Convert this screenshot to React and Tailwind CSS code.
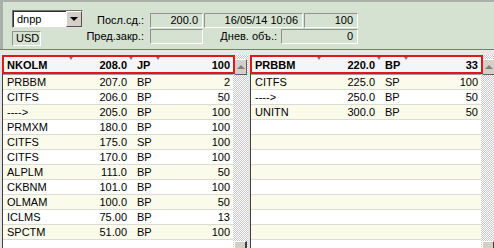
import React from "react";

const leftRows = [
  ["PRBBM", "207.0", "BP", "2"],
  ["CITFS", "206.0", "BP", "50"],
  ["---->", "205.0", "BP", "100"],
  ["PRMXM", "180.0", "BP", "100"],
  ["CITFS", "175.0", "SP", "100"],
  ["CITFS", "170.0", "BP", "100"],
  ["ALPLM", "111.0", "BP", "50"],
  ["CKBNM", "101.0", "BP", "100"],
  ["OLMAM", "100.0", "BP", "50"],
  ["ICLMS", "75.00", "BP", "13"],
  ["SPCTM", "51.00", "BP", "100"],
];

const rightRows = [
  ["CITFS", "225.0", "SP", "100"],
  ["---->", "250.0", "BP", "50"],
  ["UNITN", "300.0", "BP", "50"],
  ["", "", "", ""],
  ["", "", "", ""],
  ["", "", "", ""],
  ["", "", "", ""],
  ["", "", "", ""],
  ["", "", "", ""],
  ["", "", "", ""],
  ["", "", "", ""],
];

const Sunken = ({ className, children }) => (
  <div
    className={
      "h-full border border-t-[#8c948c] border-l-[#8c948c] border-b-white border-r-white bg-[#d5e1d1] text-right pr-[4px] leading-[13px] " +
      className
    }
  >
    {children}
  </div>
);

const Tick = ({ x }) => (
  <div
    className="absolute top-[2px] w-0 h-0 border-l-[2px] border-r-[2px] border-t-[3px] border-l-transparent border-r-transparent border-t-[#777]"
    style={{ left: x }}
  />
);

const Row = ({ r, i }) => (
  <div
    className={
      "grid grid-cols-[67px_60px_27px_76px] h-[15px] leading-[14px] border-b border-[#dcdcd4] " +
      (i % 2 === 0 ? "bg-[#fbfbeb]" : "bg-white")
    }
  >
    <div className="pl-[4px]">{r[0]}</div>
    <div className="text-right pr-[3px]">{r[1]}</div>
    <div className="pl-[7px]">{r[2]}</div>
    <div className="text-right pr-[3px]">{r[3]}</div>
  </div>
);

const Table = ({ head, rows }) => (
  <div className="flex h-full">
    <div className="w-[3px] h-full flex">
      <div className="w-[2px] bg-[#e4e4e4]" />
      <div className="w-px bg-[#404040]" />
    </div>
    <div className="w-[230px] h-full bg-white flex flex-col">
      <div className="relative grid grid-cols-[67px_60px_27px_76px] h-[20px] leading-[20px] font-bold bg-[#f3f6f8] border-b border-[#a0a0a0]">
        <div className="pl-[4px]">{head[0]}</div>
        <div className="text-right pr-[3px]">{head[1]}</div>
        <div className="pl-[7px]">{head[2]}</div>
        <div className="text-right pr-[3px]">{head[3]}</div>
        <Tick x={66} />
        <Tick x={126} />
        <Tick x={153} />
        <div className="absolute -left-px top-0 -right-[2px] bottom-0 border-2 border-[#e01818]" />
      </div>
      {rows.map((r, i) => (
        <Row key={i} r={r} i={i} />
      ))}
    </div>
    <div className="w-[15px] h-full flex flex-col bg-[repeating-conic-gradient(#c8c8c8_0%_25%,#ffffff_0%_50%)] bg-[length:2px_2px]">
      <div className="h-[4px]" />
      <div className="mx-px h-[16px] bg-[#d4d0c8] border border-t-white border-l-white border-b-[#606060] border-r-[#606060] flex items-center justify-center">
        <div className="w-0 h-0 border-l-[4px] border-r-[4px] border-b-[4px] border-l-transparent border-r-transparent border-b-[#808080]" />
      </div>
      <div className="flex-1" />
      <div className="mx-px h-[7px] bg-[#d4d0c8] border-t border-l border-t-white border-l-white border-r-2 border-r-[#404040]" />
    </div>
  </div>
);

const App = () => {
  return (
    <div className="w-[494px] h-[248px] overflow-hidden bg-[#d4d0c8] text-[11px] text-black font-['Liberation_Sans',sans-serif] flex flex-col">
      <div className="h-[49px] bg-[#d5e1d1] border-t-2 border-l-[3px] border-[#a9b0a9] flex pl-[9px] pt-[8px]">
        <div className="w-[71px] flex flex-col">
          <div className="h-[18px] bg-white border border-t-[#707070] border-l-[#707070] border-b-[#e0e0e0] border-r-[#e0e0e0] flex items-center">
            <div className="flex-1 pl-[3px] leading-[14px] border-l border-t border-[#303030] h-full">dnpp</div>
            <div className="w-[16px] h-full bg-[#d4d0c8] border border-t-white border-l-white border-b-[#505050] border-r-[#505050] flex items-center justify-center">
              <div className="w-0 h-0 border-l-[4px] border-r-[4px] border-t-[4px] border-l-transparent border-r-transparent border-t-black" />
            </div>
          </div>
          <div className="mt-[3px] w-[29px] h-[15px] border border-t-[#8c948c] border-l-[#8c948c] border-b-white border-r-white pl-[3px] leading-[13px]">
            USD
          </div>
        </div>
        <div className="pt-[3px] flex flex-col">
          <div className="flex h-[15px]">
            <div className="w-[63px] text-right leading-[14px] pr-[2px]">Посл.сд.:</div>
            <Sunken className="ml-[4px] w-[53px]">200.0</Sunken>
            <Sunken className="ml-px w-[99px]">16/05/14 10:06</Sunken>
            <Sunken className="ml-px w-[54px]">100</Sunken>
          </div>
          <div className="flex h-[15px] mt-[1px]">
            <div className="w-[63px] text-right leading-[14px] pr-[2px]">Пред.закр.:</div>
            <Sunken className="ml-[4px] w-[53px]"></Sunken>
            <div className="w-[76px] text-right leading-[14px] pr-[2px]">Днев. объ.:</div>
            <Sunken className="ml-[2px] w-[77px]">0</Sunken>
          </div>
        </div>
      </div>
      <div className="h-[6px] border-t border-[#7a7a7a] bg-[#e8e8e4]" />
      <div className="flex-1 flex">
        <Table head={["NKOLM", "208.0", "JP", "100"]} rows={leftRows} />
        <Table head={["PRBBM", "220.0", "BP", "33"]} rows={rightRows} />
      </div>
    </div>
  );
};

export default App;
